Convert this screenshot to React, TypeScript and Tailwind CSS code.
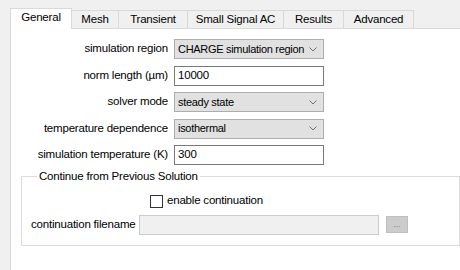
import React from "react";

const tabs = [
    { name: "Mesh", w: "w-[48px]" },
    { name: "Transient", w: "w-[70px]" },
    { name: "Small Signal AC", w: "w-[97px]" },
    { name: "Results", w: "w-[61px]" },
    { name: "Advanced", w: "w-[71px]" },
];

const Chevron = () => (
    <svg width="8" height="5" viewBox="0 0 8 5" className="shrink-0">
        <polyline points="0.5,0.5 4,4 7.5,0.5" fill="none" stroke="#707070" strokeWidth="1" />
    </svg>
);

const Combo = ({ value }: { value: string }) => (
    <div className="flex h-[20px] w-[150px] items-center justify-between border border-[#adadad] bg-[#e1e1e1] pl-[3px] pr-[6px]">
        <span className="text-[11px] tracking-[-0.3px]">{value}</span>
        <Chevron />
    </div>
);

const TextBox = ({ value }: { value: string }) => (
    <div className="flex h-[20px] w-[150px] items-center border border-[#7a7a7a] bg-white pl-[3px]">
        {value}
    </div>
);

const rows: { label: string; field: React.ReactNode }[] = [
    { label: "simulation region", field: <Combo value="CHARGE simulation region" /> },
    { label: "norm length (µm)", field: <TextBox value="10000" /> },
    { label: "solver mode", field: <Combo value="steady state" /> },
    { label: "temperature dependence", field: <Combo value="isothermal" /> },
    { label: "simulation temperature (K)", field: <TextBox value="300" /> },
];

export default function App() {
    return (
        <div
            className="flex h-[270px] w-[460px] flex-col overflow-hidden whitespace-nowrap bg-[#f0f0f0] pt-[8px] pl-[10px] text-[11.5px] leading-none tracking-[-0.2px] text-black"
            style={{ fontFamily: '"Liberation Sans", Arial, sans-serif' }}
        >
            <div className="relative z-10 -mb-px flex items-end">
                <div className="flex h-[21px] w-[62px] items-center justify-center border border-b-0 border-[#d9d9d9] bg-white pb-[2px]">
                    General
                </div>
                {tabs.map((t) => (
                    <div key={t.name} className={`-ml-px flex h-[19px] items-center justify-center border border-[#d9d9d9] bg-[#f0f0f0] pt-[1px] ${t.w}`}>
                        {t.name}
                    </div>
                ))}
            </div>
            <div className="flex-1 border-t border-l border-[#d9d9d9] bg-white">
                <div className="ml-[10px] mt-[10px] grid grid-cols-[147px_150px] items-center gap-x-[6px] gap-y-[6.5px]">
                    {rows.map((r) => (
                        <React.Fragment key={r.label}>
                            <div className="text-right">{r.label}</div>
                            {r.field}
                        </React.Fragment>
                    ))}
                </div>
                <fieldset className="ml-[10px] mt-[6px] h-[75px] border border-[#dcdcdc] pl-[9px]">
                    <legend className="ml-[6px] px-[2px]">Continue from Previous Solution</legend>
                    <div className="ml-[119px] mt-[12px] flex items-center gap-[4px]">
                        <div className="h-[13px] w-[13px] border border-[#333333] bg-white" />
                        <span>enable continuation</span>
                    </div>
                    <div className="mt-[7px] flex items-center">
                        <span className="w-[108px]">continuation filename</span>
                        <div className="h-[20px] w-[240px] border border-[#cccccc] bg-[#f0f0f0]" />
                        <div className="ml-[7px] flex h-[17px] w-[22px] items-center justify-center border border-[#bfbfbf] bg-[#cccccc] text-[9px] text-[#838383]">
                            ...
                        </div>
                    </div>
                </fieldset>
            </div>
        </div>
    );
}
